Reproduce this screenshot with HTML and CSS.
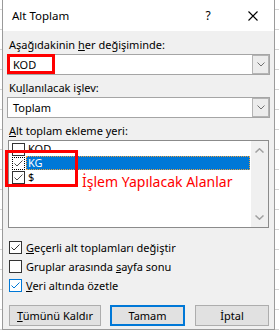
FILE: index.html
```html
<!DOCTYPE html>
<html lang="tr">
<head>
<meta charset="utf-8">
<title>Alt Toplam</title>
<link rel="stylesheet" href="styles.css">
</head>
<body>
<div class="dialog">
  <div class="titlebar">
    <span class="title">Alt Toplam</span>
    <span class="help">?</span>
    <span class="close"><svg width="10" height="10" viewBox="0 0 10 10"><path d="M0.5 0.5 L9.5 9.5 M9.5 0.5 L0.5 9.5" stroke="#000" stroke-width="1.1" fill="none"/></svg></span>
  </div>
  <div class="content">
    <div class="label">Aşağıdakinin <u>h</u>er değişiminde:</div>
    <div class="combo">
      <span class="value">KOD</span>
      <span class="drop"><svg width="8" height="5" viewBox="0 0 8 5"><path d="M0.5 0.5 L4 4 L7.5 0.5" stroke="#707070" fill="none"/></svg></span>
    </div>
    <div class="label">Ku<u>l</u>lanılacak işlev:</div>
    <div class="combo">
      <span class="value">Toplam</span>
      <span class="drop"><svg width="8" height="5" viewBox="0 0 8 5"><path d="M0.5 0.5 L4 4 L7.5 0.5" stroke="#707070" fill="none"/></svg></span>
    </div>
    <div class="label"><u>A</u>lt toplam ekleme yeri:</div>
    <div class="list">
      <div class="items">
        <div class="item"><span class="lbox"></span><span class="itext">KOD</span></div>
        <div class="item"><span class="lbox focus"><svg width="11" height="11" viewBox="0 0 11 11"><path d="M1.5 5.5 L4 8 L9.5 2.5" stroke="#505050" fill="none"/></svg></span><span class="itext sel">KG</span></div>
        <div class="item"><span class="lbox"><svg width="11" height="11" viewBox="0 0 11 11"><path d="M1.5 5.5 L4 8 L9.5 2.5" stroke="#505050" fill="none"/></svg></span><span class="itext">$</span></div>
      </div>
      <div class="scrollbar">
        <svg width="9" height="5" viewBox="0 0 9 5"><path d="M0.5 4.5 L4.5 0.8 L8.5 4.5" stroke="#a0a0a0" stroke-width="1.5" fill="none"/></svg>
        <svg width="9" height="5" viewBox="0 0 9 5"><path d="M0.5 0.5 L4.5 4.2 L8.5 0.5" stroke="#a0a0a0" stroke-width="1.5" fill="none"/></svg>
      </div>
    </div>
    <div class="checks">
      <div class="check"><span class="cbox"><svg width="11" height="11" viewBox="0 0 11 11"><path d="M1.5 5.5 L4 8 L9.5 2.5" stroke="#333" fill="none"/></svg></span><span><u>G</u>eçerli alt toplamları değiştir</span></div>
      <div class="check"><span class="cbox"></span><span>Gruplar arasında <u>s</u>ayfa sonu</span></div>
      <div class="check"><span class="cbox blue"><svg width="11" height="11" viewBox="0 0 11 11"><path d="M1.5 5.5 L4 8 L9.5 2.5" stroke="#0078d7" fill="none"/></svg></span><span><u>V</u>eri altında özetle</span></div>
    </div>
    <div class="buttons">
      <button class="btn wide"><u>T</u>ümünü Kaldır</button>
      <button class="btn default">Tamam</button>
      <button class="btn cancel">İptal</button>
    </div>
  </div>
  <div class="annot box-kod"></div>
  <div class="annot box-checks"></div>
  <div class="annot note">İşlem Yapılacak Alanlar</div>
</div>
</body>
</html>
```
FILE: styles.css
```css
html, body {
  margin: 0;
  padding: 0;
}
body {
  width: 279px;
  height: 331px;
  overflow: hidden;
  background-color: #fff;
  background-image: repeating-linear-gradient(to bottom, transparent 0, transparent 9px, #d4d4d4 9px, #d4d4d4 10px, transparent 10px, transparent 20px);
  font-family: "Noto Sans", "DejaVu Sans", sans-serif;
  font-size: 11px;
  color: #000;
}
.dialog {
  position: relative;
  margin-left: 2px;
  width: 273px;
  height: 330px;
  box-sizing: border-box;
  border: 1px solid #9a9a9a;
  border-top: none;
  background: #f0f0f0;
}
.titlebar {
  height: 31px;
  background: #fff;
  display: flex;
  align-items: center;
  padding-left: 9px;
}
.title {
  flex: 1;
  font-size: 11.5px;
}
.help {
  width: 46px;
  text-align: center;
  font-size: 12px;
}
.close {
  width: 43px;
  display: flex;
  justify-content: center;
}
.content {
  padding: 0 4px;
}
.label {
  padding-left: 2px;
  height: 15px;
  line-height: 15px;
  margin-top: 5px;
  margin-bottom: 2px;
}
.label:first-child {
  margin-top: 6px;
}
.combo {
  height: 21px;
  box-sizing: border-box;
  border: 1px solid #a5a5a5;
  background: #fff;
  display: flex;
  align-items: center;
}
.value {
  flex: 1;
  padding-left: 5px;
}
.drop {
  width: 17px;
  height: 19px;
  box-sizing: border-box;
  border: 1px solid #b4b4b4;
  background: #ececec;
  display: flex;
  align-items: center;
  justify-content: center;
}
.list {
  margin: 0 1px;
  height: 88px;
  box-sizing: border-box;
  border: 1px solid #8b8b8b;
  background: #fff;
  display: flex;
}
.items {
  flex: 1;
  padding-top: 1px;
  padding-left: 3px;
  padding-right: 1px;
}
.item {
  height: 14px;
  display: flex;
  align-items: center;
}
.lbox {
  width: 13px;
  height: 13px;
  box-sizing: border-box;
  border: 1px solid #333;
  background: #fff;
  display: flex;
  align-items: center;
  justify-content: center;
}
.lbox.focus {
  border: 1px dotted #000;
}
.itext {
  margin-left: 1px;
  padding-left: 2px;
  height: 14px;
  line-height: 14px;
  flex: 1;
  box-sizing: border-box;
}
.itext.sel {
  background: #0078d7;
  color: #fff;
  outline: 1px dotted #e8a040;
  outline-offset: -1px;
}
.scrollbar {
  width: 17px;
  background: #f0f0f0;
  display: flex;
  flex-direction: column;
  align-items: center;
  justify-content: space-between;
  padding: 7px 0;
}
.checks {
  margin-top: 10px;
  padding-left: 2px;
}
.check {
  height: 19px;
  display: flex;
  align-items: center;
}
.cbox {
  width: 13px;
  height: 13px;
  box-sizing: border-box;
  border: 1px solid #333;
  background: #fff;
  margin-right: 4px;
  display: flex;
  align-items: center;
  justify-content: center;
}
.cbox.blue {
  border-color: #0078d7;
}
.buttons {
  margin-top: 10px;
  padding-left: 2px;
  display: flex;
}
.btn {
  height: 21px;
  box-sizing: border-box;
  border: 1px solid #adadad;
  background: #e1e1e1;
  font-family: inherit;
  font-size: 11px;
  color: #000;
  padding: 0;
}
.btn.wide {
  width: 92px;
}
.btn.default {
  width: 75px;
  margin-left: 9px;
  border: 2px solid #0078d7;
}
.btn.cancel {
  width: 74px;
  margin-left: 10px;
}
.annot {
  position: absolute;
}
.box-kod {
  left: 4px;
  top: 54px;
  width: 48px;
  height: 20px;
  border: 3px solid #f00;
  box-sizing: border-box;
}
.box-checks {
  left: 2px;
  top: 150px;
  width: 73px;
  height: 37px;
  border: 3px solid #f00;
  box-sizing: border-box;
}
.note {
  left: 79px;
  top: 174px;
  font-size: 14px;
  line-height: 16px;
  color: #f00;
  white-space: nowrap;
}
```
